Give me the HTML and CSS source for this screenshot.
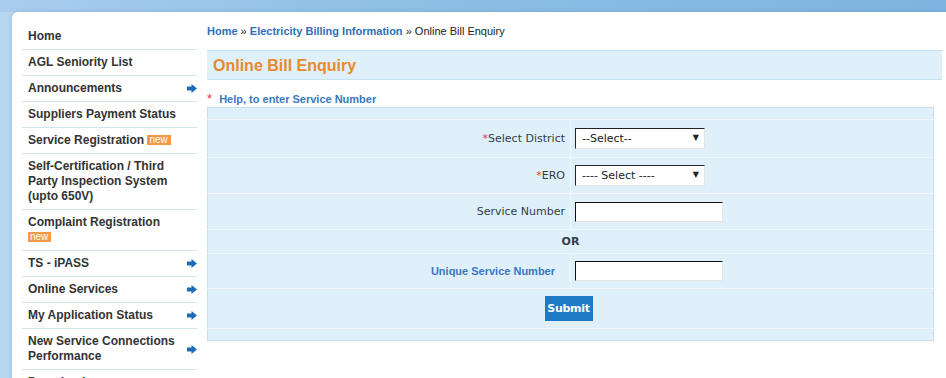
FILE: index.html
```html
<!DOCTYPE html>
<html lang="en">
<head>
  <meta charset="UTF-8" />
  <title>Online Bill Enquiry</title>
  <link rel="stylesheet" href="styles.css">
</head>
<body>
  <div class="page">

    <ul class="side-menu">
      <li><span class="txt">Home</span></li>
      <li><span class="txt">AGL Seniority List</span></li>
      <li><span class="txt">Announcements</span><svg class="arrow" viewBox="0 0 10 9"><path d="M0 2.5H4.5V0L10 4.5 4.5 9V6.5H0Z"/></svg></li>
      <li><span class="txt">Suppliers Payment Status</span></li>
      <li><span class="txt">Service Registration <span class="new">new</span></span></li>
      <li><span class="txt">Self-Certification / Third Party Inspection System (upto 650V)</span></li>
      <li><span class="txt">Complaint Registration<br><span class="new">new</span></span></li>
      <li><span class="txt">TS - iPASS</span><svg class="arrow" viewBox="0 0 10 9"><path d="M0 2.5H4.5V0L10 4.5 4.5 9V6.5H0Z"/></svg></li>
      <li><span class="txt">Online Services</span><svg class="arrow" viewBox="0 0 10 9"><path d="M0 2.5H4.5V0L10 4.5 4.5 9V6.5H0Z"/></svg></li>
      <li><span class="txt">My Application Status</span><svg class="arrow" viewBox="0 0 10 9"><path d="M0 2.5H4.5V0L10 4.5 4.5 9V6.5H0Z"/></svg></li>
      <li><span class="txt">New Service Connections Performance</span><svg class="arrow" viewBox="0 0 10 9"><path d="M0 2.5H4.5V0L10 4.5 4.5 9V6.5H0Z"/></svg></li>
      <li><span class="txt">Downloads</span></li>
    </ul>

    <div class="content">
      <div class="breadcrumb">
        <a href="#">Home</a> &raquo; <a href="#">Electricity Billing Information</a> &raquo; Online Bill Enquiry
      </div>

      <h2 class="title">Online Bill Enquiry</h2>

      <p class="help"><span class="req">*</span> <a href="#">Help, to enter Service Number</a></p>

      <table class="form-table">
        <colgroup>
          <col class="col-label">
          <col class="col-field">
        </colgroup>
        <tr class="gap"><td colspan="2"></td></tr>
        <tr class="row-district">
          <th><span class="req">*</span>Select District</th>
          <td>
            <span class="select-wrap">
              <select>
                <option>--Select--</option>
              </select>
            </span>
          </td>
        </tr>
        <tr class="row-ero">
          <th><span class="req">*</span>ERO</th>
          <td>
            <span class="select-wrap">
              <select>
                <option>---- Select ----</option>
              </select>
            </span>
          </td>
        </tr>
        <tr class="row-service">
          <th>Service Number</th>
          <td><input type="text" /></td>
        </tr>
        <tr class="row-or">
          <td colspan="2" class="or">OR</td>
        </tr>
        <tr class="row-unique">
          <th class="uniq">Unique Service Number</th>
          <td><input type="text" /></td>
        </tr>
        <tr class="row-submit">
          <td colspan="2" class="center"><button type="button">Submit</button></td>
        </tr>
        <tr class="gap gap-bottom"><td colspan="2"></td></tr>
      </table>
    </div>

  </div>
</body>
</html>
```

FILE: styles.css
```css
html, body {
  height: 100%;
}
body {
  margin: 0;
  overflow: hidden;
  font-family: 'Liberation Sans', Arial, sans-serif;
  background:
    linear-gradient(to right, #a9cdee 0%, #8fc0e6 40%, #7db4df 100%) top left / 100% 12px no-repeat,
    linear-gradient(to right, #b7d6f0 0%, #c6dff3 100%);
}
.page {
  display: flex;
  align-items: flex-start;
  margin: 12px 0 0 12px;
  min-height: 400px;
  background: #fff;
  border-top-left-radius: 6px;
  box-shadow: 0 0 4px rgba(60, 110, 160, 0.25);
}

/* left menu */
.side-menu {
  list-style: none;
  width: 175px;
  margin: 12px 0 0 10px;
  padding: 0;
}
.side-menu li {
  display: flex;
  align-items: center;
  padding: 5px 0 5px 6px;
  line-height: 15px;
  font-size: 12px;
  font-weight: bold;
  color: #333;
  border-bottom: 1px solid #cfe3f1;
}
.side-menu .txt {
  flex: 1;
}
.side-menu li:nth-child(6) .txt {
  padding-right: 20px;
}
.arrow {
  width: 10px;
  height: 9px;
  margin-left: 4px;
  fill: #1d6cb5;
}
.new {
  display: inline-block;
  background: #f29a48;
  color: #fff;
  font-size: 10px;
  font-weight: normal;
  line-height: 10px;
  padding: 0 3px 0 2px;
  vertical-align: 1px;
}

/* content */
.content {
  flex: 1;
  margin-left: 10px;
  margin-right: 4px;
  padding-top: 13px;
}
.breadcrumb {
  font-size: 11px;
  line-height: 13px;
  color: #222;
}
.breadcrumb a {
  color: #2f6fb7;
  font-weight: bold;
  text-decoration: none;
}
.title {
  margin: 12px 0 0;
  padding: 0 6px;
  height: 28px;
  line-height: 29px;
  font-size: 16px;
  color: #e88a2c;
  background: #dff0fb;
  border-top: 1px solid #c8e1f1;
  border-bottom: 1px solid #c8e1f1;
}
.help {
  margin: 12px 0 0;
  font-size: 11px;
  line-height: 14px;
}
.help a {
  color: #3a78c0;
  font-weight: bold;
  text-decoration: none;
  margin-left: 4px;
}
.req {
  color: #e2344e;
}
.help .req {
  font-size: 13px;
}

/* form table */
.form-table {
  width: 727px;
  margin-top: 1px;
  table-layout: fixed;
  border-collapse: collapse;
  background: #dff0fb;
  border: 1px solid #c8e1f1;
  font-family: 'DejaVu Sans', Verdana, sans-serif;
  font-size: 11px;
  color: #333d46;
}
.col-label {
  width: 363px;
}
.form-table th,
.form-table td {
  padding: 0;
  border-top: 1px solid #f1f8fd;
  border-bottom: 1px solid #f1f8fd;
}
.form-table th {
  text-align: right;
  font-weight: normal;
  padding-right: 5px;
  border-right: 1px solid #f1f8fd;
}
.form-table td {
  padding-left: 4px;
}
.form-table .gap td {
  height: 11px;
  border-top: 0;
}
.form-table .gap-bottom td {
  height: 11px;
  border-bottom: 0;
}
.row-district th, .row-district td { height: 37px; }
.row-ero th, .row-ero td { height: 35px; }
.row-service th, .row-service td { height: 35px; }
.row-or td { height: 23px; }
.row-unique th, .row-unique td { height: 34px; }
.row-submit td { height: 39px; }

.form-table .or {
  text-align: center;
  font-weight: bold;
  padding-left: 0;
}
.form-table .center {
  text-align: center;
  padding: 0 4px 0 0;
}
.form-table th.uniq {
  padding-right: 15px;
  font-family: 'Liberation Sans', Arial, sans-serif;
  font-weight: bold;
  color: #3a78c0;
}

.select-wrap {
  position: relative;
  display: inline-block;
  vertical-align: middle;
}
.select-wrap::after {
  content: "\25BC";
  position: absolute;
  right: 6px;
  top: 5px;
  font-size: 8px;
  color: #222;
  pointer-events: none;
}
select {
  -webkit-appearance: none;
  appearance: none;
  width: 130px;
  height: 21px;
  margin: 0;
  padding: 0 0 0 6px;
  font-family: 'DejaVu Sans', Verdana, sans-serif;
  font-size: 11px;
  color: #222;
  background: #fff;
  border: 1px solid;
  border-color: #222 #e4e4e4 #e4e4e4 #222;
  border-radius: 0;
}
input[type="text"] {
  width: 148px;
  height: 20px;
  margin: 0;
  padding: 0 4px;
  box-sizing: border-box;
  vertical-align: middle;
  background: #fff;
  border: 1px solid;
  border-color: #111 #e6e6e6 #e6e6e6 #111;
}
button {
  width: 48px;
  height: 25px;
  padding: 0;
  border: none;
  background: #1e7bc6;
  color: #fff;
  font-family: 'DejaVu Sans', Verdana, sans-serif;
  font-size: 11px;
  font-weight: bold;
  letter-spacing: -0.3px;
  cursor: pointer;
}
```
